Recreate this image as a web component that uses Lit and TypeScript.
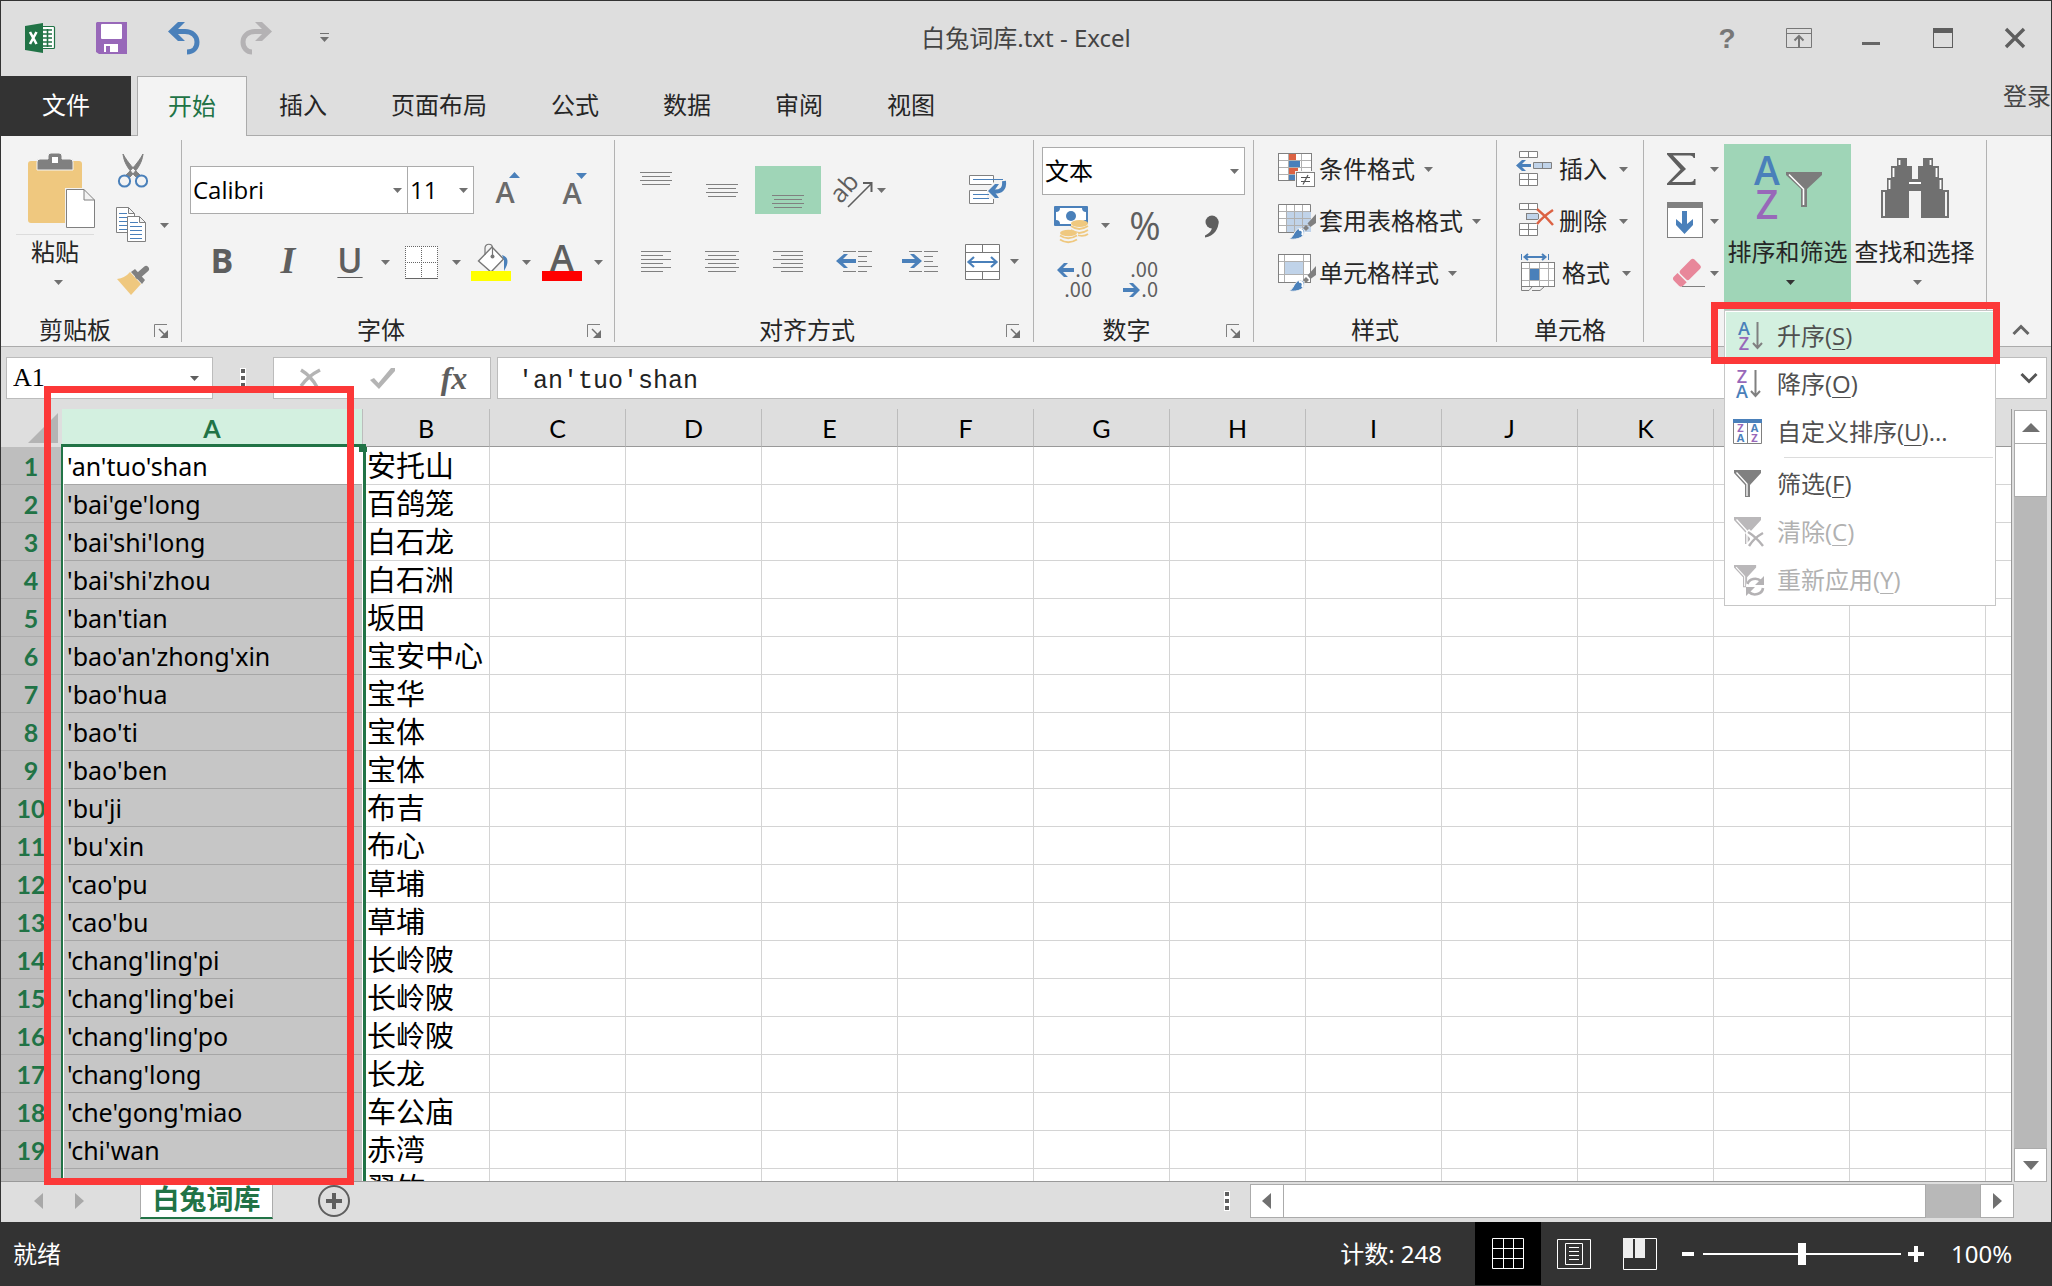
import { LitElement, html, css, svg, nothing, TemplateResult, SVGTemplateResult } from "lit";
import { customElement } from "lit/decorators.js";
import { classMap } from "lit/directives/class-map.js";

const BLUE = "#4a80ba";
const GREY = "#808080";
const DARK = "#5e5e5e";
const PURPLE = "#9868b9";
const TAN = "#efc87f";
const ORANGE = "#dc6243";
const PALE = "#c0d3e9";

const icon = (w: number, h: number, body: SVGTemplateResult) =>
  html`<svg width=${w} height=${h} viewBox="0 0 ${w} ${h}" aria-hidden="true">${body}</svg>`;

const caret = (color = "#707070") => icon(9, 5, svg`<path d="M0 0H9L4.5 5Z" fill=${color}/>`);

const rules = (list: [number, number, number][], color = GREY) =>
  svg`${list.map(([x, y, w]) => svg`<rect x=${x} y=${y} width=${w} height="1" fill=${color}/>`)}`;

const funnel = (color: string, shine = "#fff") => svg`
  <path d="M0 0H27V3L16 15V27H11V15L0 3Z" fill=${color}/>
  <path d="M2.5 2.5L13 14V26" fill="none" stroke=${shine} stroke-width="1.3"/>`;

const brush = svg`
  <path d="M11 37C16 35 16 28 21 26.5C26 25.5 28 30 25 33.5C22 37 17 37.5 11 37Z" fill=${BLUE} stroke="#f3f3f3" stroke-width="1"/>
  <path d="M21 28C24 27 26 30 24 33" fill="none" stroke="#fff" stroke-width="2"/>
  <path d="M25 26L28 23L31 26L28 29Z" fill=${GREY}/>
  <path d="M29.5 21.5L38 12V21L32.5 25Z" fill=${GREY}/>`;

const icons = {
  excel: icon(32, 32, svg`
    <rect x="15" y="4.5" width="15.5" height="22" rx="1" fill="#fff" stroke="#217346" stroke-width="1.2"/>
    <path d="M18 8H28M18 12H28M18 16H28M18 20H28M18 24H28M23.5 7V25" stroke="#217346" stroke-width="1.6"/>
    <path d="M1 4L19 1V31L1 28Z" fill="#217346"/>
    <path d="M6 10L12.5 22M12.5 10L6 22" stroke="#fff" stroke-width="2.6"/>`),
  save: icon(32, 32, svg`
    <path d="M1 0H31V32H3L0 30V1Z" fill=${PURPLE}/>
    <rect x="5" y="2" width="21" height="15" rx="1" fill="#fff"/>
    <path d="M8 22H22V30H14V24H10V30H8Z" fill="#fff"/>`),
  undo: icon(32, 32, svg`
    <path d="M3 9.5H17C24 9.5 29 14 29 20C29 26 25 30 19 30" fill="none" stroke=${BLUE} stroke-width="5"/>
    <path d="M0 9.5L10 0H17L7.5 9.5L17 19H10Z" fill=${BLUE}/>`),
  redo: icon(32, 32, svg`
    <path d="M29 9.5H15C8 9.5 3 14 3 20C3 26 7 30 12 30" fill="none" stroke="#b4b2b4" stroke-width="5"/>
    <path d="M32 9.5L22 0H15L24.5 9.5L15 19H22Z" fill="#b4b2b4"/>`),
  more: icon(9, 9, svg`<path d="M0 .5H9" stroke="#707070"/><path d="M0 4H9L4.5 9Z" fill="#707070"/>`),
  help: icon(20, 28, svg`<text x="10" y="24" text-anchor="middle" font-family="Liberation Sans" font-weight="700" font-size="28" fill="#777">?</text>`),
  ribbonOptions: icon(26, 20, svg`
    <path d="M.5 .5H25.5V19.5H.5ZM.5 5.5H25.5" fill="none" stroke="#777"/>
    <path d="M13 19V8M8.500 12.5L13 8L17.5 12.5" fill="none" stroke="#777" stroke-width="2"/>`),
  minimize: icon(20, 20, svg`<rect x="1" y="14" width="18" height="3" fill="#666"/>`),
  maximize: icon(20, 20, svg`<rect x=".5" y=".5" width="19" height="19" fill="none" stroke="#5e5e5e"/><rect width="20" height="5" fill="#5e5e5e"/>`),
  close: icon(20, 20, svg`<path d="M1 1L19 19M19 1L1 19" stroke="#5e5e5e" stroke-width="3.4"/>`),

  paste: icon(80, 84, svg`
    <rect x="13" y="9" width="54" height="62" rx="3" fill=${TAN}/>
    <path d="M22 18V10Q22 7 25 7H33V4Q33 1 36 1H44Q47 1 47 4V7H55Q58 7 58 10V18Z" fill=${GREY} stroke="#f3f3f3"/>
    <rect x="37" y="5" width="6" height="6" fill="#fff"/>
    <path d="M50 36H69L81 48V78H50Z" fill="#f3f3f3"/>
    <path d="M51.5 37.5H69L79.5 48V75.5H51.5ZM69 37.5V48H79.5" fill="#fff" stroke=${GREY}/>
    <rect x="1" y="82" width="78" height="1" fill="#dcdcdc"/>`),
  cut: icon(32, 36, svg`
    <path d="M6 1C7 11 13 18 19 24L23 22C17 16 11 10 6 1ZM26 1C25 11 19 18 13 24L9 22C15 16 21 10 26 1Z" fill=${GREY} stroke=${GREY}/>
    <circle cx="7.5" cy="28" r="5.6" fill="#f3f3f3" stroke=${BLUE} stroke-width="2"/>
    <circle cx="24.5" cy="28" r="5.6" fill="#f3f3f3" stroke=${BLUE} stroke-width="2"/>`),
  copy: icon(34, 36, svg`
    <path d="M.5 .5H12.5L18.5 6.5V25.5H.5ZM12.5 .5V6.5H18.5" fill="#fff" stroke=${GREY}/>
    ${rules([[3, 6, 8], [3, 10, 8], [3, 14, 8], [3, 18, 8], [3, 22, 8]], BLUE)}
    <path d="M11.5 9.5H23.5L29.5 15.5V34.5H11.5ZM23.5 9.5V15.5H29.5" fill="#fff" stroke=${GREY}/>
    ${rules([[14, 15, 8], [14, 19, 12], [14, 23, 12], [14, 27, 12], [14, 31, 12]], BLUE)}`),
  painter: icon(34, 30, svg`
    <path d="M1 13Q9 12 14 6L25 18L15 29Z" fill=${TAN}/>
    <path d="M15 6L19 3L29 14L26 18Z" fill=${GREY}/>
    <path d="M22 10L30 3" stroke=${GREY} stroke-width="6" stroke-linecap="round"/>`),
  launcher: icon(15, 15, svg`
    <path d="M.5 13V.5H13" fill="none" stroke="#808080"/>
    <path d="M5 5L12 12" stroke="#707070" stroke-width="1.4"/><path d="M14 6V14H6Z" fill="#707070"/>`),

  grow: icon(28, 40, svg`
    <text x="11" y="33" text-anchor="middle" font-family="Open Sans" font-weight="600" font-size="29" fill="#6a6a6a">A</text>
    <path d="M15 8L20.5 2L26 8Z" fill=${BLUE}/>`),
  shrink: icon(28, 40, svg`
    <text x="11" y="34" text-anchor="middle" font-family="Open Sans" font-weight="600" font-size="29" fill="#6a6a6a">A</text>
    <path d="M15 3H26L20.5 9Z" fill=${BLUE}/>`),
  borders: icon(33, 33, svg`
    <rect x=".5" y=".5" width="32" height="32" fill="#fff"/>
    <path d="M.5 0V32M16.5 0V32M32.5 0V32M0 .5H33M0 16.5H33" stroke="#666" stroke-dasharray="1 1"/>
    <rect y="32" width="33" height="1" fill="#666"/>`),
  fill: icon(40, 38, svg`
    <path d="M7.5 18L21 4L32.5 16L20 29Z" fill="#fff" stroke="#777" stroke-width="1.4"/>
    <path d="M14 12V5C14 0 21.5 0 21.5 5V13" fill="none" stroke="#777" stroke-width="1.2"/>
    <circle cx="21.5" cy="13.5" r="2" fill="#777"/>
    <path d="M31 12C38 14 38 20 33 28V17Z" fill=${BLUE}/>
    <rect y="28" width="40" height="10" fill="#ff0"/>`),
  fontColor: icon(40, 38, svg`
    <text x="20" y="28" text-anchor="middle" font-family="Open Sans" font-weight="600" font-size="36" fill=${DARK}>A</text>
    <rect y="28" width="40" height="10" fill="#f00"/>`),

  top: icon(32, 44, rules([[0, 4, 32], [2, 8, 28], [0, 12, 32], [2, 16, 28]])),
  middle: icon(32, 44, rules([[0, 16, 32], [2, 20, 28], [0, 24, 32], [2, 28, 28]])),
  bottom: icon(32, 44, rules([[0, 27, 32], [2, 31, 28], [0, 35, 32], [2, 39, 28]])),
  orient: icon(66, 48, svg`
    <text transform="translate(29 28) rotate(-48)" x="-14" y="0" font-family="Open Sans" font-size="25" fill=${DARK}>ab</text>
    <path d="M27 41L50 18" stroke=${DARK} stroke-width="1.6"/><path d="M42 17H50.5V26" fill="none" stroke=${DARK} stroke-width="2"/>
    <path d="M56 22H65L60.5 27Z" fill="#707070"/>`),
  wrap: icon(42, 30, svg`<g transform="translate(4 0)">
    <path d="M.5 .5H24.5V9.5H.5ZM.5 15.5H24.5V28.5H.5Z" fill="#fff" stroke=${GREY}/>
    <path d="M26 6V24H18V14Z" fill="#f3f3f3"/>
    <path d="M4 4.5H34M4 19.5H20M4 23.5H20" stroke=${BLUE}/>
    <path d="M35 6C36 14 32 17 24 16.5" fill="none" stroke=${BLUE} stroke-width="4"/>
    <path d="M19 16L26 9H30L25 16L30 23H26Z" fill=${BLUE}/></g>`),
  left: icon(34, 22, rules([[2, 0, 30], [2, 4, 22], [2, 8, 30], [2, 12, 22], [2, 16, 30], [2, 20, 22]])),
  center: icon(34, 22, rules([[0, 0, 34], [3, 4, 28], [0, 8, 34], [3, 12, 28], [0, 16, 34], [3, 20, 28]])),
  right: icon(34, 22, rules([[2, 0, 30], [10, 4, 22], [2, 8, 30], [10, 12, 22], [2, 16, 30], [10, 20, 22]])),
  outdent: icon(36, 22, svg`
    ${rules([[7, 0, 13], [22, 0, 14], [22, 5, 9], [22, 10, 9], [22, 15, 14], [7, 20, 13], [22, 20, 9]])}
    <path d="M0 10L8 3H12L7 8H20V12H7L12 17H8Z" fill=${BLUE}/>`),
  indent: icon(36, 22, svg`
    ${rules([[7, 0, 13], [22, 0, 14], [22, 5, 9], [22, 10, 9], [22, 15, 14], [7, 20, 13], [22, 20, 14]])}
    <path d="M20 10L12 3H8L13 8H0V12H13L8 17H12Z" fill=${BLUE}/>`),
  merge: icon(66, 36, svg`
    <path d="M12.5 .5H46.5V35.5H12.5ZM12.5 8.5H46.5M12.5 27.5H46.5M29.5 0V8M29.5 28V36" fill="#fff" stroke="#777"/>
    <path d="M16 18H43M21 13L15.5 18L21 23M38 13L43.5 18L38 23" fill="none" stroke=${BLUE} stroke-width="2.2"/>
    <path d="M57 15H66L61.5 20Z" fill="#707070"/>`),

  currency: icon(34, 38, svg`
    <rect width="34" height="20" rx="1" fill=${BLUE}/>
    <path d="M6 2H28Q28 6 32 6V14Q28 14 28 18H6Q6 14 2 14V6Q6 6 6 2Z" fill="#fff"/>
    <circle cx="17" cy="10" r="5" fill=${BLUE}/>
    <path d="M17 18V29Q25 35 34 29V18Q25 12 17 18Z" fill="#f3f3f3"/>
    <ellipse cx="25.5" cy="17.5" rx="8.5" ry="3.4" fill=${TAN}/>
    <path d="M17 20Q25 26 34 20M17 24Q25 30 34 24M22 29Q30 31 34 28" fill="none" stroke=${TAN} stroke-width="1.8"/>
    <path d="M5 27V37H24V27Q14 21 5 27Z" fill="#f3f3f3"/>
    <ellipse cx="14.5" cy="27" rx="8.5" ry="3.2" fill=${TAN}/>
    <path d="M6 29.5Q14 35 23 29.5M6 33.5Q14 39 23 33.5" fill="none" stroke=${TAN} stroke-width="1.8"/>`),
  percent: icon(34, 48, svg`<text x="17" y="39" text-anchor="middle" font-family="Open Sans" font-size="38" fill=${DARK}>%</text>`),
  comma: icon(14, 28, svg`<circle cx="8" cy="11" r="6.5" fill=${DARK}/><path d="M14.5 10C15 18 10 25 1 26.5V24.5C6 22 8 19 8 16Z" fill=${DARK}/>`),
  moreDecimals: icon(38, 42, svg`
    <path d="M1 12L8 5H12L7 10H18V14H7L12 19H8Z" fill=${BLUE}/>
    <g font-family="Noto Sans CJK SC" font-size="20" fill=${DARK} text-anchor="end"><text x="36" y="19">.0</text><text x="36" y="39">.00</text></g>`),
  lessDecimals: icon(38, 42, svg`
    <path d="M18 32L11 25H7L12 30H1V34H12L7 39H11Z" fill=${BLUE}/>
    <g font-family="Noto Sans CJK SC" font-size="20" fill=${DARK} text-anchor="end"><text x="36" y="19">.00</text><text x="36" y="39">.0</text></g>`),

  conditional: icon(38, 38, svg`
    <rect x=".5" y="3.5" width="33" height="27" fill="#fff"/>
    <path d="M10.5 3V30M23.5 3V30M0 10.5H34M0 17.5H34M0 24.5H34" stroke="#b0b0b0"/>
    <rect x="11" y="4" width="7" height="6" fill=${ORANGE}/><rect x="11" y="11" width="11" height="6" fill=${BLUE}/>
    <rect x="11" y="18" width="9" height="6" fill=${ORANGE}/><rect x="11" y="25" width="6" height="5" fill=${BLUE}/>
    <rect x=".5" y="3.5" width="33" height="27" fill="none" stroke=${GREY}/>
    <rect x="17" y="21" width="21" height="17" fill="#f3f3f3"/>
    <rect x="18.5" y="22.5" width="18" height="14" fill="#fff" stroke=${GREY}/>
    <path d="M23 27.5H32M23 31.5H32M30 25L25 34.5" stroke="#555" stroke-width="1.2"/>`),
  tableFormat: icon(38, 38, svg`
    <rect x=".5" y="2.5" width="32" height="28" fill="#fff"/><rect x="9" y="10" width="24" height="20" fill=${PALE}/>
    <path d="M8.5 3V30M16.5 3V30M24.5 3V30M0 9.5H33M0 16.5H33M0 23.5H33" stroke="#b0b0b0"/>
    <path d="M32.5 10V2.5H.5V30.5H18" fill="none" stroke=${GREY}/>${brush}`),
  cellStyle: icon(38, 38, svg`
    <rect x=".5" y=".5" width="32" height="28" fill="#fff"/><rect x="7" y="8" width="19" height="13" fill=${PALE}/>
    <path d="M6.5 1V28M25.5 1V28M0 7.5H33M0 20.5H33" stroke="#b0b0b0"/>
    <rect x=".5" y=".5" width="32" height="28" fill="none" stroke=${GREY}/>${brush}`),
  insertCells: icon(38, 38, svg`
    <path d="M4.5 1.5H22.5V7.5H4.5ZM13.5 1.5V7.5M4.5 23.5H22.5V35.5H4.5ZM4.5 29.5H22.5M13.5 23.5V35.5" fill="#fff" stroke=${GREY}/>
    <path d="M18.5 12.5H36.5V18.5H18.5ZM27.5 12.5V18.5" fill=${PALE} stroke=${GREY}/>
    <path d="M1 15.5L7 10H11L7 14H16V17H7L11 21H7Z" fill=${BLUE}/>`),
  deleteCells: icon(38, 38, svg`
    <path d="M4.5 1.5H22.5V7.5H4.5ZM13.5 1.5V7.5M4.5 21.5H22.5V33.5H4.5ZM4.5 27.5H22.5M13.5 21.5V33.5" fill="#fff" stroke=${GREY}/>
    <rect x="11.5" y="11.5" width="12" height="6" fill=${PALE} stroke=${GREY}/>
    <path d="M23 8L38 22M38 8L22 22" stroke="#f3f3f3" stroke-width="5"/>
    <path d="M22 7C27 11 33 17 38 23M38 8C32 12 26 17 22 22" fill="none" stroke=${ORANGE} stroke-width="2.4"/>`),
  formatCells: icon(41, 38, svg`
    <path d="M6.5 0V6M33.5 0V6" stroke=${BLUE}/><path d="M10 3H30M13 0L9.5 3L13 6M27 0L30.5 3L27 6" fill="none" stroke=${BLUE} stroke-width="2"/>
    <rect x="6.5" y="8.5" width="33" height="24" fill="#fff"/>
    <path d="M14.5 9V32M24.5 9V32M33.5 9V32M7 14.5H39M7 26.5H39" stroke="#b0b0b0"/>
    <rect x="15" y="15" width="9" height="11" fill=${BLUE}/><rect x="6.5" y="8.5" width="33" height="24" fill="none" stroke=${GREY}/>
    <path d="M6.5 33V36.5H14L17 33M17 36.5H25L29 33" fill="none" stroke=${GREY}/>`),
  sum: icon(40, 38, svg`<path d="M1 3H29V8H27.5Q27 5.5 24 5.5H7L20 19L6 32H24Q28 32 28 29H29.5V35H1V33.5L14.5 19.5L1 4.5Z" fill=${DARK}/>`),
  fillDown: icon(40, 38, svg`
    <rect x="1.5" y=".5" width="35" height="35" fill="#fff" stroke=${GREY}/><rect x="1" width="36" height="6" fill=${GREY}/>
    <path d="M16 9H21V22L27 17V23L18.5 32L10 23V17L16 22Z" fill=${BLUE}/>`),
  eraser: icon(40, 38, svg`
    <g transform="rotate(-45 20 19)" fill="#e8879a"><path d="M9 13H14V26H9Q6 26 6 23V16Q6 13 9 13Z"/>
    <rect x="15.5" y="13" width="20" height="13" rx="2.5"/></g>
    <path d="M16 32.5H39" stroke=${GREY}/>`),
  sortFilter: icon(68, 84, svg`
    <g font-family="Open Sans" font-weight="600" font-size="39" text-anchor="middle"><text x="13" y="33" fill=${BLUE}>A</text><text x="13" y="67" fill=${PURPLE}>Z</text></g>
    <path d="M32 20H68V23L53 37V55H47V37L32 23Z" fill="#7c7c7c"/>
    <path d="M35 22.5L49.5 37V53" fill="none" stroke="#fff" stroke-width="1.6"/>`),
  find: icon(68, 84, svg`
    <path d="M16 6H26V14H31V27H37V14H42V6H52V14H58V26H62V38H68V66H40V39H28V66H0V38H6V26H10V14H16Z" fill="#707070"/>
    <path d="M18.5 8V13M12.5 16V25M8.5 28V37M3 40V64M49.5 8V13M55.5 16V25M59.5 28V37M65 40V64" stroke="#fff" stroke-width="1.8"/>
    <rect x="28" y="30" width="12" height="2" fill="#fff"/>`),
  collapse: icon(18, 12, svg`<path d="M1.5 10L9 2.5L16.5 10" fill="none" stroke="#666" stroke-width="3"/>`),
  expand: icon(18, 12, svg`<path d="M1.5 2L9 9.5L16.5 2" fill="none" stroke="#555" stroke-width="3"/>`),

  asc: icon(32, 36, svg`
    <g font-family="Open Sans" font-weight="600" font-size="18" text-anchor="middle"><text x="12" y="17" fill=${BLUE}>A</text><text x="12" y="32" fill=${PURPLE}>Z</text></g>
    <path d="M25.5 4V29M21 25L25.5 30L30 25" fill="none" stroke=${GREY} stroke-width="2"/>`),
  desc: icon(32, 36, svg`
    <g font-family="Open Sans" font-weight="600" font-size="18" text-anchor="middle"><text x="10" y="17" fill=${PURPLE}>Z</text><text x="10" y="32" fill=${BLUE}>A</text></g>
    <path d="M23.5 4V29M19 25L23.5 30L28 25" fill="none" stroke=${GREY} stroke-width="2"/>`),
  custom: icon(32, 32, svg`
    <path d="M1.5 4.5H29.5V27.5H1.5ZM15.5 5V28" fill="#fff" stroke=${GREY}/><rect x="1" y="3" width="29" height="4" fill=${BLUE}/>
    <g font-family="Open Sans" font-weight="700" font-size="11" text-anchor="middle"><text x="8.5" y="16" fill=${PURPLE}>Z</text><text x="8.5" y="26" fill=${BLUE}>A</text><text x="22.5" y="16" fill=${BLUE}>A</text><text x="22.5" y="26" fill=${PURPLE}>Z</text></g>`),
  filter: icon(32, 32, svg`<g transform="translate(2 2)">${funnel(GREY)}</g>`),
  clear: icon(32, 32, svg`<g transform="translate(2 1)">${funnel("#bab8ba")}</g>
    <path d="M15 15L31 31M31 15L15 31" stroke="#fff" stroke-width="6"/>
    <path d="M16 16Q24 21 31 30M31 17Q22 22 17 30" fill="none" stroke="#b4b2b4" stroke-width="2.4"/>`),
  reapply: icon(32, 32, svg`<g transform="translate(2 1) scale(.82)">${funnel("#bab8ba")}</g>
    <circle cx="23" cy="22" r="9" fill="#fff"/>
    <path d="M15.5 20A8 7 0 0 1 29 17M31 24A8 7 0 0 1 17 28" fill="none" stroke="#b4b2b4" stroke-width="2.6"/>
    <path d="M32 12V21H23ZM14 32V23H23Z" fill="#b4b2b4"/>`),

  grip: icon(6, 20, svg`<path d="M0 0H6V20H0Z" fill="#fff"/><path d="M1 1H5V5H1ZM1 8H5V12H1ZM1 15H5V19H1Z" fill="#5e5e5e"/>`),
  cancel: icon(24, 20, svg`<path d="M3 2Q13 8 19 19M22 2Q10 8 3 18" fill="none" stroke="#b4b4b4" stroke-width="3.4"/>`),
  accept: icon(26, 22, svg`<path d="M1 13L5 11L9.5 16L22 1H26V4L10 22Z" fill="#b4b4b4"/>`),
  addSheet: icon(34, 34, svg`<circle cx="17" cy="17" r="15" fill="none" stroke="#5e5e5e" stroke-width="2"/><path d="M17 9V25M9 17H25" stroke="#5e5e5e" stroke-width="4"/>`),
  prev: icon(9, 16, svg`<path d="M9 0V16L0 8Z" fill="#a8a8a8"/>`),
  next: icon(9, 16, svg`<path d="M0 0V16L9 8Z" fill="#a8a8a8"/>`),
  scrollLeft: icon(9, 16, svg`<path d="M9 0V16L0 8Z" fill="#707070"/>`),
  scrollRight: icon(9, 16, svg`<path d="M0 0V16L9 8Z" fill="#707070"/>`),
  scrollUp: icon(18, 9, svg`<path d="M0 9H18L9 0Z" fill="#707070"/>`),
  scrollDown: icon(16, 9, svg`<path d="M0 0H16L8 9Z" fill="#707070"/>`),
  normalView: icon(32, 32, svg`<path d="M.5 .5H31.5V30.5H.5ZM11.5 .5V30.5M21.5 .5V30.5M.5 10.5H31.5M.5 20.5H31.5" fill="none" stroke="#fff"/>`),
  layoutView: icon(34, 32, svg`<path d="M.5 1.5H33.5V30.5H.5ZM8.5 5.5H25.5V26.5H8.5ZM12 9.5H22M12 13.5H22M12 17.5H22M12 21.5H22" fill="none" stroke="#fff"/>`),
  breakView: icon(34, 32, svg`<path d="M.5 .5H33.5V31.5H.5Z" fill="none" stroke="#fff"/><path d="M0 0H10V20H0ZM12 0H22V20H12Z" fill="#eee"/>`),
  minus: icon(12, 4, svg`<rect width="12" height="4" fill="#fff"/>`),
  plus: icon(16, 16, svg`<path d="M8 0V16M0 8H16" stroke="#fff" stroke-width="4"/>`),
};

type IconName = keyof typeof icons;

const ROWS: [string, string][] = [
  ["'an'tuo'shan", "安托山"],
  ["'bai'ge'long", "百鸽笼"],
  ["'bai'shi'long", "白石龙"],
  ["'bai'shi'zhou", "白石洲"],
  ["'ban'tian", "坂田"],
  ["'bao'an'zhong'xin", "宝安中心"],
  ["'bao'hua", "宝华"],
  ["'bao'ti", "宝体"],
  ["'bao'ben", "宝体"],
  ["'bu'ji", "布吉"],
  ["'bu'xin", "布心"],
  ["'cao'pu", "草埔"],
  ["'cao'bu", "草埔"],
  ["'chang'ling'pi", "长岭陂"],
  ["'chang'ling'bei", "长岭陂"],
  ["'chang'ling'po", "长岭陂"],
  ["'chang'long", "长龙"],
  ["'che'gong'miao", "车公庙"],
  ["'chi'wan", "赤湾"],
  ["", "翠竹"],
];
const EMPTY_COLUMNS = ["C", "D", "E", "F", "G", "H", "I", "J", "K", "", "", ""];

const base = css`
  * { box-sizing: border-box; }
  svg { display: block; flex: none; overflow: visible; }
  button, input, select {
    font: inherit; color: inherit; background: none; border: 0; border-radius: 0;
    padding: 0; margin: 0; outline: none;
  }
  button { display: flex; align-items: center; justify-content: center; white-space: nowrap; }
`;

@customElement("excel-ribbon")
class ExcelRibbon extends LitElement {
  static styles = [base, css`
    :host { display: flex; height: 211px; background: #f3f3f3; border-bottom: 1px solid #ababab; color: #262626; }
    .group { display: flex; flex-direction: column; flex: none; margin: 4px 0; border-right: 1px solid #b2b2b2; }
    .body { height: 178px; }
    .caption { position: relative; display: flex; justify-content: center; height: 24px; }
    .caption.dialog { padding-right: 34px; }
    .launcher { position: absolute; right: 12px; top: 6px; }
    .clipboard { width: 181px; }
    .clipboard .caption { padding-right: 32px; }
    .font { width: 433px; }
    .alignment { width: 419px; }
    .number { width: 220px; }
    .styles { width: 243px; }
    .cells { width: 147px; }
    .editing { width: 343px; }

    .clipboard .body { display: grid; grid-template-columns: 108px 48px 14px; grid-template-rows: 54px 54px 58px; padding-top: 4px; }
    .clipboard .paste { grid-row: 1 / 4; }
    .big { flex-direction: column; justify-content: flex-start; gap: 4px; padding-top: 8px; line-height: 24px; }
    .big svg:last-child { margin: 12px 0 0 6px; }

    .font .body, .alignment .body { display: flex; flex-direction: column; gap: 24px; padding: 26px 0 0 8px; }
    .row { display: grid; height: 48px; }
    .font .first { grid-template-columns: 218px 66px 67px 67px; }
    .font .second { grid-template-columns: 64px 68px 56px 14px 58px 12px 58px 12px 60px 12px; }
    .alignment .row { grid-template-columns: repeat(6, 66px); }
    .wrap { grid-column: 6; }
    .on { background: #9fd5b7; }
    .number .body { display: flex; flex-direction: column; gap: 6px; padding: 7px 0 0 8px; }
    .number .combo { width: 203px; }
    .number .second { grid-template-columns: 58px 10px 70px 62px; }
    .number .third { grid-template-columns: 66px 66px; }

    .combo { position: relative; height: 48px; background: #fff; border: 1px solid #ababab; }
    .combo + .combo { border-left: 0; }
    .combo select { appearance: none; width: 100%; height: 100%; padding-left: 2px; color: #000; line-height: 30px; }
    .combo svg { position: absolute; right: 5px; top: 21px; pointer-events: none; }
    .glyph { padding-bottom: 4px; color: #5e5e5e; font-weight: 700; font-size: 34px; line-height: 40px; }
    .italic { font-family: "Liberation Serif", serif; font-style: italic; font-size: 38px; }
    .under { font-weight: 600; text-decoration: underline; text-decoration-thickness: 1px; text-underline-offset: 4px; }

    .list { display: flex; flex-direction: column; padding-top: 3px; }
    .item { height: 52px; justify-content: flex-start; }
    .styles .list { padding-left: 24px; }
    .styles .item { gap: 3px; }
    .styles .item svg:last-child { margin-left: 6px; }
    .cells .list { padding-left: 18px; }
    .cells .item { gap: 6px; }
    .cells .item svg:last-child { margin-left: 6px; }
    .editing .body { display: flex; }
    .editing .list { width: 80px; padding-left: 22px; }
    .editing .item { gap: 4px; }
    .drop { position: relative; margin-top: 4px; }
    .drop .big { width: 127px; height: 166px; }
    .collapse { align-self: flex-end; margin: 0 21px 10px auto; }

    .menu {
      position: absolute; z-index: 5; top: 166px; left: 0; width: 272px; padding: 1px;
      background: #fff; border: 1px solid #c6c6c6; color: #505050;
    }
    .entry { width: 100%; height: 48px; justify-content: flex-start; padding-left: 6px; gap: 13px; }
    .entry.hot { background: #d3f0e0; }
    .entry:disabled { color: #b1b1b1; }
    .rule { height: 1px; margin: 1px 1px 2px 58px; background: #dcdcdc; }
    .mark { position: absolute; top: -9px; left: -14px; width: 289px; height: 62px; border: 7px solid #fc3838; pointer-events: none; }
    u { text-decoration-thickness: 1px; text-underline-offset: 4px; }
  `];

  private tool(name: IconName, label: string, cls = "") {
    return html`<button class=${cls} aria-label=${label}>${icons[name]}</button>`;
  }

  private arrow(label: string) {
    return html`<button aria-label=${label}>${caret()}</button>`;
  }

  private item(name: IconName, label: string, text = "") {
    return html`<button class="item" aria-label=${label}>${icons[name]}${text ? html`<span>${text}</span>` : nothing}${caret()}</button>`;
  }

  private group(cls: string, caption: string, dialog: boolean, body: TemplateResult) {
    return html`<section class="group ${cls}" aria-label=${caption || cls}>
      <div class="body">${body}</div>
      <div class=${classMap({ caption: true, dialog })}>${caption}
        ${dialog ? html`<button class="launcher" aria-label=${caption}>${icons.launcher}</button>` : nothing}
      </div>
    </section>`;
  }

  private entry(name: IconName, text: string, key: string, opts: { hot?: boolean; off?: boolean; tail?: string } = {}) {
    return html`<button role="menuitem" class=${classMap({ entry: true, hot: !!opts.hot })} ?disabled=${opts.off}>
      ${icons[name]}<span>${text}(<u>${key}</u>)${opts.tail ?? ""}</span></button>`;
  }

  render() {
    return html`
      ${this.group("clipboard", "剪贴板", true, html`
        <button class="big paste">${icons.paste}<span>粘贴</span>${caret()}</button>
        ${this.tool("cut", "剪切")}<span></span>
        ${this.tool("copy", "复制")}${this.arrow("复制选项")}
        ${this.tool("painter", "格式刷")}`)}
      ${this.group("font", "字体", true, html`
        <div class="row first">
          <div class="combo"><select aria-label="字体名称"><option>Calibri</option></select>${caret()}</div>
          <div class="combo"><select aria-label="字号"><option>11</option></select>${caret()}</div>
          ${this.tool("grow", "增大字号")}${this.tool("shrink", "减小字号")}
        </div>
        <div class="row second">
          <button class="glyph" aria-label="加粗">B</button>
          <button class="glyph italic" aria-label="倾斜">I</button>
          <button class="glyph under" aria-label="下划线">U</button>${this.arrow("下划线选项")}
          ${this.tool("borders", "边框")}${this.arrow("边框选项")}
          ${this.tool("fill", "填充颜色")}${this.arrow("填充选项")}
          ${this.tool("fontColor", "字体颜色")}${this.arrow("颜色选项")}
        </div>`)}
      ${this.group("alignment", "对齐方式", true, html`
        <div class="row">
          ${this.tool("top", "顶端对齐")}${this.tool("middle", "垂直居中")}${this.tool("bottom", "底端对齐", "on")}
          ${this.tool("orient", "方向")}${this.tool("wrap", "自动换行", "wrap")}
        </div>
        <div class="row">
          ${this.tool("left", "左对齐")}${this.tool("center", "居中")}${this.tool("right", "右对齐")}
          ${this.tool("outdent", "减少缩进量")}${this.tool("indent", "增加缩进量")}${this.tool("merge", "合并后居中")}
        </div>`)}
      ${this.group("number", "数字", true, html`
        <div class="combo"><select aria-label="数字格式"><option>文本</option></select>${caret()}</div>
        <div class="row second">
          ${this.tool("currency", "会计数字格式")}${this.arrow("会计选项")}
          ${this.tool("percent", "百分比样式")}${this.tool("comma", "千位分隔样式")}
        </div>
        <div class="row third">${this.tool("moreDecimals", "增加小数位数")}${this.tool("lessDecimals", "减少小数位数")}</div>`)}
      ${this.group("styles", "样式", false, html`<div class="list">
        ${this.item("conditional", "条件格式", "条件格式")}
        ${this.item("tableFormat", "套用表格格式", "套用表格格式")}
        ${this.item("cellStyle", "单元格样式", "单元格样式")}</div>`)}
      ${this.group("cells", "单元格", false, html`<div class="list">
        ${this.item("insertCells", "插入", "插入")}
        ${this.item("deleteCells", "删除", "删除")}
        ${this.item("formatCells", "格式", "格式")}</div>`)}
      ${this.group("editing", "", false, html`
        <div class="list">${this.item("sum", "自动求和")}${this.item("fillDown", "填充")}${this.item("eraser", "清除")}</div>
        <div class="drop">
          <button class="big on" aria-haspopup="menu" aria-expanded="true">${icons.sortFilter}<span>排序和筛选</span>${caret("#333")}</button>
          <div class="menu" role="menu">
            ${this.entry("asc", "升序", "S", { hot: true })}
            ${this.entry("desc", "降序", "O")}
            ${this.entry("custom", "自定义排序", "U", { tail: "..." })}
            <div class="rule" role="separator"></div>
            ${this.entry("filter", "筛选", "F")}
            ${this.entry("clear", "清除", "C", { off: true })}
            ${this.entry("reapply", "重新应用", "Y", { off: true })}
            <div class="mark"></div>
          </div>
        </div>
        <div class="drop"><button class="big">${icons.find}<span>查找和选择</span>${caret()}</button></div>`)}
      <button class="collapse" aria-label="折叠功能区">${icons.collapse}</button>`;
  }
}

@customElement("excel-sheet")
class ExcelSheet extends LitElement {
  static styles = [base, css`
    :host { position: relative; display: flex; flex: 1; min-height: 0; }
    .viewport { position: relative; flex: 1; min-width: 0; overflow: hidden; background: #fff; border-right: 1px solid #999; border-bottom: 1px solid #999; }
    table { width: max-content; border-collapse: separate; border-spacing: 0; table-layout: fixed; font-family: Lato, "Noto Sans CJK SC", sans-serif; font-size: 25px; line-height: 30px; color: #000; }
    th, td { height: 38px; padding: 0; overflow: hidden; white-space: nowrap; border-right: 1px solid #d4d4d4; border-bottom: 1px solid #d4d4d4; }
    .rowhead { width: 61px; }
    .cola { width: 301px; }
    .colb { width: 127px; }
    .col { width: 136px; }
    thead th { background: #dedede; border-right-color: #bcbcbc; border-bottom-color: #999; font-weight: 400; }
    thead .picked { background: #d3f0e0; color: #217346; font-weight: 700; }
    thead .corner { border-bottom-color: #dedede; border-right-color: #dedede; }
    .corner svg { margin-left: 27px; }
    tbody th { background: #bebebe; color: #217346; font-weight: 700; border-right-color: #bebebe; border-bottom-color: #adadad; }
    .key { padding-left: 5px; background: #c6c6c6; border-right-color: #c6c6c6; border-bottom-color: #a6a6a6; font-family: "Noto Sans", sans-serif; font-size: 25px; }
    .active { background: #fff; }
    .name { padding-left: 4px; font-size: 29px; }
    .selection { position: absolute; left: 60px; top: 35px; bottom: -9px; width: 305px; border: 3px solid #217346; border-left-width: 2px; box-shadow: inset 1px 0 #fff, inset -1px 0 #fff; pointer-events: none; }
    .handle { position: absolute; right: -4px; top: 0; width: 8px; height: 5px; background: #217346; }
    .mark { position: absolute; z-index: 2; left: 43px; top: -23px; bottom: -3px; width: 310px; border: 7px solid #fc3838; pointer-events: none; }
    .scroll { display: flex; flex-direction: column; width: 33px; margin: 1px 4px 0 2px; background: #b8b8b8; }
    .scroll button { height: 34px; background: #fff; border: 1px solid #ababab; }
    .thumb { height: 54px; margin-top: -1px; background: #fff; border: 1px solid #ababab; }
    .scroll .down { margin-top: auto; }
  `];

  render() {
    return html`
      <div class="viewport">
        <table>
          <colgroup><col class="rowhead"><col class="cola"><col class="colb">${EMPTY_COLUMNS.map(() => html`<col class="col">`)}</colgroup>
          <thead><tr>
            <th class="corner">${icon(30, 30, svg`<path d="M30 0V30H0Z" fill="#b4b4b4"/>`)}</th>
            <th class="picked">A</th><th>B</th>${EMPTY_COLUMNS.map((c) => html`<th>${c}</th>`)}
          </tr></thead>
          <tbody>${ROWS.map(([key, name], i) => html`<tr>
            <th scope="row">${key ? i + 1 : ""}</th>
            <td class=${classMap({ key: true, active: i === 0 })}>${key}</td>
            <td class="name">${name}</td>${EMPTY_COLUMNS.map(() => html`<td></td>`)}
          </tr>`)}</tbody>
        </table>
        <div class="selection"><div class="handle"></div></div>
      </div>
      <div class="scroll">
        <button aria-label="向上滚动">${icons.scrollUp}</button>
        <div class="thumb"></div>
        <button class="down" aria-label="向下滚动">${icons.scrollDown}</button>
      </div>
      <div class="mark"></div>`;
  }
}

@customElement("app-root")
class AppRoot extends LitElement {
  static styles = [base, css`
    :host {
      display: flex; flex-direction: column; height: 100vh; overflow: hidden; background: #dedede;
      border: 1px solid #333; border-bottom: 0; color: #444;
      font-family: "Open Sans", "Noto Sans CJK SC", sans-serif; font-size: 24px; line-height: 24px;
    }
    .titlebar { display: grid; grid-template-columns: 1fr auto 1fr; align-items: center; height: 75px; flex: none; padding-bottom: 2px; }
    .quick { display: flex; align-items: center; gap: 40px; padding-left: 23px; }
    .quick button { min-width: 24px; }
    .window { display: flex; justify-content: flex-end; }
    .window button { width: 72px; height: 40px; }
    .title { font-size: 24px; font-weight: 400; margin: 0; line-height: 30px; font-family: "Noto Sans", "Noto Sans CJK SC", sans-serif; }
    .tabs { display: flex; height: 60px; flex: none; box-shadow: inset 0 -1px #ababab; color: #262626; }
    .tab { height: 60px; padding: 0 32px 2px; }
    .file { width: 130px; margin-right: 6px; background: #333; color: #fff; }
    .home { width: 110px; background: #f3f3f3; border: 1px solid #ababab; border-bottom: 0; color: #217346; }
    .signin { align-self: flex-start; margin-left: auto; padding-top: 8px; color: #444; text-decoration: none; }
    .formula { display: flex; flex: none; height: 62px; padding: 10px 4px 10px 5px; }
    .box { display: flex; align-items: center; background: #fff; border: 1px solid #bcbcbc; }
    .namebox { width: 207px; padding: 0 13px 0 6px; color: #000; }
    .namebox input { flex: 1; min-width: 0; font-family: "Liberation Serif", serif; font-size: 26px; }
    .grip { display: flex; align-items: center; justify-content: center; width: 60px; }
    .actions { width: 218px; margin-right: 6px; }
    .actions button { flex: 1; height: 40px; }
    .fx { font-family: "Liberation Serif", serif; font-style: italic; font-weight: 700; font-size: 32px; color: #5e5e5e; }
    .entry { flex: 1; padding: 0 8px 0 20px; color: #222; }
    .entry input { flex: 1; padding-top: 6px; font-family: "Liberation Mono", monospace; font-size: 25px; }
    .sheetbar { display: flex; align-items: center; flex: none; height: 40px; padding: 0 37px 2px 33px; }
    .nav { display: flex; gap: 32px; width: 106px; }
    .sheettab { align-self: flex-start; width: 133px; height: 37px; background: #fff; border: 1px solid #ababab; border-width: 0 1px 2px; border-bottom-color: #217346; color: #217346; font-weight: 700; font-size: 27px; line-height: 32px; padding-bottom: 2px; }
    .add { margin-left: 44px; }
    .sheetbar .grip { width: 46px; margin-left: auto; }
    .hscroll { display: flex; width: calc(38% + 12px); height: 34px; background: #b8b8b8; }
    .hscroll button { width: 34px; background: #fff; border: 1px solid #ababab; }
    .hthumb { flex: 1; margin: 0 54px 0 -1px; background: #fff; border: 1px solid #ababab; }
    .status { display: flex; align-items: center; flex: none; height: 65px; padding: 0 0 2px 12px; background: #333; color: #fff; }
    .count { margin: 0 33px 0 auto; }
    .view { width: 66px; height: 63px; }
    .view.current { background: #000; }
    .step { width: 30px; height: 40px; }
    .zoom { appearance: none; width: 198px; height: 22px; background: linear-gradient(#fff, #fff) center / 100% 2px no-repeat; }
    .zoom::-webkit-slider-thumb { appearance: none; width: 8px; height: 22px; background: #fff; border: 0; border-radius: 0; }
    .percent { width: 120px; padding-left: 20px; }
    .count, .percent { font-family: "Noto Sans", "Noto Sans CJK SC", sans-serif; font-size: 24px; }
  `];

  private iconButton(name: IconName, label: string) {
    return html`<button aria-label=${label}>${icons[name]}</button>`;
  }

  render() {
    return html`
      <header class="titlebar">
        <div class="quick">
          ${icons.excel}
          ${this.iconButton("save", "保存")}${this.iconButton("undo", "撤消")}${this.iconButton("redo", "恢复")}${this.iconButton("more", "自定义快速访问工具栏")}
        </div>
        <h1 class="title">白兔词库.txt - Excel</h1>
        <div class="window">
          ${this.iconButton("help", "帮助")}${this.iconButton("ribbonOptions", "功能区显示选项")}${this.iconButton("minimize", "最小化")}${this.iconButton("maximize", "最大化")}${this.iconButton("close", "关闭")}
        </div>
      </header>
      <nav class="tabs">
        <button class="tab file">文件</button>
        <button class="tab home">开始</button>
        ${["插入", "页面布局", "公式", "数据", "审阅", "视图"].map((t) => html`<button class="tab">${t}</button>`)}
        <a class="signin" href="#">登录</a>
      </nav>
      <excel-ribbon></excel-ribbon>
      <div class="formula">
        <div class="box namebox"><input aria-label="名称框" value="A1">${caret("#5e5e5e")}</div>
        <div class="grip">${icons.grip}</div>
        <div class="box actions">
          <button aria-label="取消">${icons.cancel}</button>
          <button aria-label="输入">${icons.accept}</button>
          <button class="fx" aria-label="插入函数">fx</button>
        </div>
        <div class="box entry"><input aria-label="编辑栏" value="'an'tuo'shan"><button aria-label="展开编辑栏">${icons.expand}</button></div>
      </div>
      <excel-sheet></excel-sheet>
      <div class="sheetbar">
        <div class="nav"><button aria-label="上一个工作表">${icons.prev}</button><button aria-label="下一个工作表">${icons.next}</button></div>
        <button class="sheettab">白兔词库</button>
        <button class="add" aria-label="新工作表">${icons.addSheet}</button>
        <div class="grip">${icons.grip}</div>
        <div class="hscroll">
          <button aria-label="向左滚动">${icons.scrollLeft}</button>
          <div class="hthumb"></div>
          <button aria-label="向右滚动">${icons.scrollRight}</button>
        </div>
      </div>
      <footer class="status">
        <span>就绪</span>
        <span class="count">计数: 248</span>
        <button class="view current" aria-label="普通">${icons.normalView}</button>
        <button class="view" aria-label="页面布局">${icons.layoutView}</button>
        <button class="view" aria-label="分页预览">${icons.breakView}</button>
        <button class="step" aria-label="缩小">${icons.minus}</button>
        <input class="zoom" type="range" min="10" max="190" value="100" aria-label="缩放">
        <button class="step" aria-label="放大">${icons.plus}</button>
        <span class="percent">100%</span>
      </footer>`;
  }
}
